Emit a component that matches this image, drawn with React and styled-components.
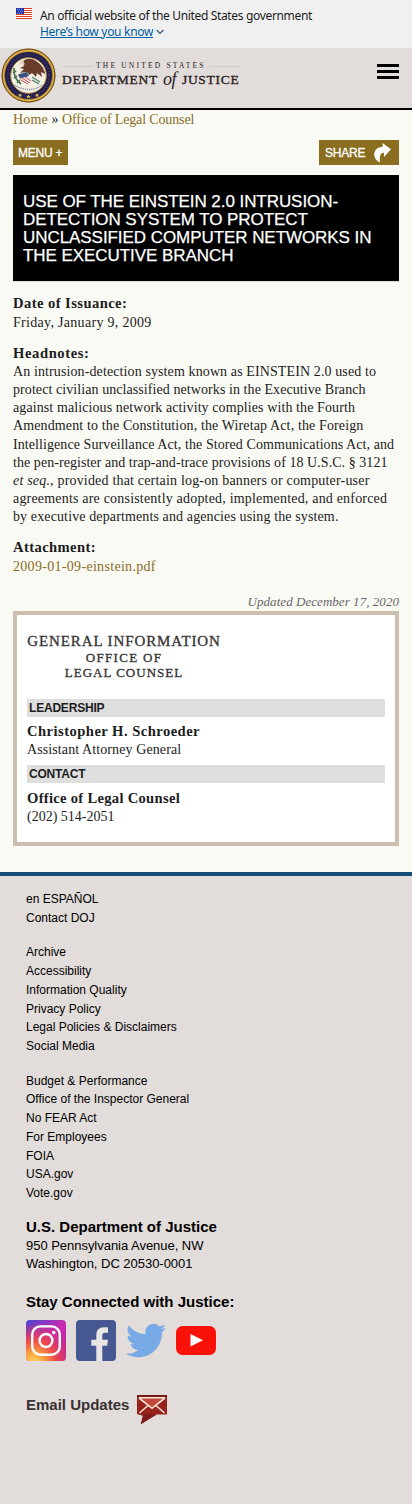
import React from 'react';
import styled, { createGlobalStyle } from 'styled-components';

const serif = '"Liberation Serif", serif';
const sans = '"Liberation Sans", sans-serif';
const gold = '#8a6d1f';

const Global = createGlobalStyle`
  * { box-sizing: border-box; }
  body { margin: 0; background: #fafaf5; color: #1c1c1c; font: 14px/18.2px ${serif}; }
  h1, h2, h3, p, ul { margin: 0; padding: 0; font-weight: inherit; font-size: inherit; }
  a { color: inherit; text-decoration: none; }
  svg { display: block; flex: none; }
`;

const Banner = styled.aside`
  display: flex;
  gap: 8px;
  height: 48px;
  padding: 8px 16px;
  background: #f0f0f0;
  font: 12px/16px "Noto Sans", sans-serif;
  letter-spacing: -0.34px;
  color: #1b1b1b;
  white-space: nowrap;
`;
const KnowLink = styled.a`
  display: flex;
  align-items: center;
  gap: 3px;
  color: #005ea2;
  letter-spacing: -0.3px;
  span { text-decoration: underline; }
`;

const Header = styled.header`
  display: flex;
  align-items: flex-start;
  height: 62px;
  background: #e2dcda;
  border-bottom: 2px solid #000;
`;
const Brand = styled.a`
  display: flex;
  flex: 1;
  padding: 0 0 0 1px;
  color: #2a211f;
`;
const Wordmark = styled.div`
  width: 179px;
  margin: 12px 0 0 6px;
  white-space: nowrap;
`;
const TopWords = styled.div`
  display: flex;
  align-items: center;
  gap: 3px;
  height: 12px;
  font-size: 7.5px;
  letter-spacing: 2.2px;
  &::before, &::after { content: ''; height: 1px; background: #d3cbc8; }
  &::before { width: 31px; }
  &::after { flex: 1; }
`;
const BigWords = styled.div`
  display: flex;
  height: 16px;
  font-size: 13.5px;
  line-height: 15px;
  letter-spacing: 0.72px;
  -webkit-text-stroke: 0.35px #2a211f;
`;
const Of = styled.i`
  width: 24px;
  padding-left: 5px;
  font-size: 18px;
  line-height: 15px;
  letter-spacing: -0.5px;
  -webkit-text-stroke: 0;
`;
const Burger = styled.button`
  display: grid;
  gap: 3px;
  width: 22px;
  margin: 16px 13px 0 0;
  padding: 0;
  border: 0;
  background: none;
  span { height: 3px; background: #000; }
`;

const Main = styled.main`
  padding: 0 13px;
`;
const Crumbs = styled.nav`
  height: 30px;
  padding-top: 1px;
  white-space: nowrap;
  a { color: ${gold}; letter-spacing: -0.14px; }
  a:first-child { letter-spacing: 0.2px; }
`;
const Actions = styled.div`
  display: flex;
  justify-content: space-between;
`;
const Action = styled.button`
  display: flex;
  align-items: center;
  justify-content: space-between;
  width: ${p => p.$w}px;
  height: 25px;
  padding: 1px ${p => p.$right}px 0 ${p => p.$left}px;
  border: 0;
  background: ${gold};
  color: #fff;
  font: 12px/24px ${sans};
  letter-spacing: -0.22px;
  white-space: nowrap;
  -webkit-text-stroke: 0.3px #fff;
`;
const Title = styled.h1`
  height: 106px;
  margin-top: 10px;
  padding: 18px 10px 16px;
  background: #000;
  color: #fff;
  box-shadow: 0 1px 0 #d9d9d6;
  font: 17px/18px ${sans};
  letter-spacing: -0.06px;
  text-transform: uppercase;
  white-space: nowrap;
  -webkit-text-stroke: 0.25px #fff;
`;

const Field = styled.section`
  margin-top: ${p => p.$gap || 12.8}px;
`;
const Label = styled.h2`
  margin: -0.9px 0 0.9px;
  font-size: 14.6px;
  font-weight: bold;
  letter-spacing: ${p => p.$ls}px;
  white-space: nowrap;
`;
const Line = styled.span`
  display: block;
  letter-spacing: ${p => p.$ls || 0}px;
  white-space: nowrap;
`;
const FileLink = styled.a`
  display: block;
  letter-spacing: 0.31px;
  color: ${gold};
`;
const Updated = styled.p`
  margin-top: 17.1px;
  font-size: 13px;
  font-style: italic;
  letter-spacing: 0.05px;
  text-align: right;
  color: #666;
`;

const Card = styled.section`
  height: 235px;
  padding: 17px 10px 0;
  border: 4px solid #cdbfb0;
  background: #fff;
`;
const CardTitle = styled.h2`
  width: 194px;
  height: 67px;
  text-align: center;
  white-space: nowrap;
  color: #333;
  -webkit-text-stroke: 0.3px #333;
`;
const CapLine = styled.span`
  display: block;
  font-size: ${p => p.$size}px;
  line-height: ${p => p.$lh}px;
  letter-spacing: ${p => p.$ls}px;
`;
const Bar = styled.h3`
  height: 18px;
  margin-top: ${p => p.$gap || 0}px;
  margin-bottom: 6px;
  padding-left: 2px;
  background: #dedede;
  font: bold 12px/19px ${sans};
  letter-spacing: -0.2px;
`;

const Footer = styled.footer`
  height: 632px;
  margin-top: 26px;
  padding: 13.9px 26px 0;
  border-top: 4px solid #124d79;
  background: #e2dcda;
  color: #000;
  font: 12px/18.7px ${sans};
`;
const Links = styled.ul`
  list-style: none;
  margin-bottom: ${p => p.$last ? 14.4 : 16.1}px;
`;
const FootTitle = styled.h3`
  margin-top: ${p => p.$gap || 0}px;
  font-size: 15px;
  font-weight: bold;
  line-height: 19px;
  color: ${p => p.$color || '#000'};
`;
const Address = styled.p`
  padding-top: 0.6px;
  font-size: 13px;
  line-height: 18px;
  letter-spacing: -0.03px;
`;
const Social = styled.div`
  display: flex;
  gap: 10px;
  margin-top: 9px;
`;
const Email = styled.a`
  display: flex;
  align-items: flex-start;
  gap: 8px;
  margin-top: 33.6px;
`;

const Flag = () => (
  <svg width="16" height="11" viewBox="0 0 16 11">
    <rect width="16" height="11" fill="#fff" />
    {[0, 2, 4, 6, 8, 10].map(y => <rect key={y} y={y} width="16" height="1" fill="#db3e1f" />)}
    <rect width="8" height="6" fill="#1e33b1" />
    {[1, 3, 5].map(y => [1, 3, 5].map(x => <rect key={`${x}${y}`} x={x + (y === 3 ? 1 : 0)} y={y - .2} width=".9" height=".7" fill="#dfe4ff" />))}
  </svg>
);

const Seal = () => (
  <svg width="55" height="55" viewBox="0 0 55 55">
    <circle cx="27.5" cy="27.5" r="27" fill="#a5792c" />
    <circle cx="27.5" cy="27.5" r="26.4" fill="none" stroke="#6e4c1c" strokeWidth="1" />
    <circle cx="27.5" cy="27.5" r="25" fill="none" stroke="#e0b748" strokeWidth="1.3" />
    <circle cx="27.5" cy="27.5" r="23.6" fill="#211d4e" />
    <circle cx="27.5" cy="27.5" r="20.7" fill="none" stroke="#aaa078" strokeWidth="1.7" strokeDasharray="1 1.9" opacity=".3" />
    <circle cx="27.5" cy="27.5" r="17.8" fill="#f4efe2" stroke="#b78b42" />
    <path d="M22 13c4-3 9-3 13 0 5 3 8 7 9 13l-4-2 1 5-5-4-1 4-4-4-4 3-3-4-5 1 4-4-4-1 4-2z" fill="#683b2b" />
    <path d="M22 12.5c-3 .5-4.5 2.5-4 4.5l3-1.5 3 1z" fill="#d9d2bd" />
    <path d="M13 20q-1 10 7 16M15 23l-3 2m4 3-3 2m6 2-3 3" fill="none" stroke="#42764e" strokeWidth="1.7" />
    <path d="m17 27 9-3 6 7-3 6-10-4z" fill="#f8ecea" />
    <path d="m17 26.5 9-2.5 2 4-9 2.5z" fill="#35517e" />
    <path d="m19 31.5 8 4.5m-6-6 8 5m-5-6 6 4" stroke="#c9555c" strokeWidth="1" />
    <path d="m31 29 8 5m-8-2 7 4" stroke="#47806b" strokeWidth="1.3" />
    <path d="M13.5 37q14 9 28 0" fill="none" stroke="#7c89ae" strokeWidth="1.4" strokeDasharray="1.2 1" />
    {[19, 27.5, 36].map(x => <path key={x} d={`M${x} ${x === 27.5 ? 46.6 : 45.2}l.7 1.4 1.5.1-1.2 1 .4 1.4-1.4-.8-1.4.8.4-1.4-1.2-1 1.5-.1z`} fill="#e4c15a" />)}
  </svg>
);

const ShareArrow = () => (
  <svg width="18" height="20" viewBox="0 0 18 20">
    <path d="M9.5 0 18 6.2 11 14V9.8c-3-.2-5 2.8-4 9.6C3 18 .5 13.4 1.4 9.8 2.3 6 5.6 3.9 9.7 4z" fill="#fff" />
  </svg>
);

const Instagram = () => (
  <svg width="40" height="41" viewBox="0 0 40 40" preserveAspectRatio="none">
    <defs>
      <linearGradient id="igBase" x1=".1" y1="0" x2=".9" y2="1">
        <stop offset="0" stopColor="#4b43d0" /><stop offset=".45" stopColor="#c92bb0" /><stop offset="1" stopColor="#b8249a" />
      </linearGradient>
      <radialGradient id="igWarm" cx=".2" cy="1.05" r="1">
        <stop offset="0" stopColor="#ffd85c" /><stop offset=".25" stopColor="#fca541" /><stop offset=".55" stopColor="#f04a48" /><stop offset="1" stopColor="#e0306c" stopOpacity="0" />
      </radialGradient>
    </defs>
    <rect width="40" height="40" rx="4" fill="url(#igBase)" />
    <rect width="40" height="40" rx="4" fill="url(#igWarm)" />
    <g fill="none" stroke="#fff" strokeWidth="2.4">
      <rect x="6.2" y="6.2" width="27.6" height="27.6" rx="8" />
      <circle cx="20" cy="20" r="6.4" />
    </g>
    <circle cx="27.8" cy="12.2" r="1.8" fill="#fff" />
  </svg>
);

const Facebook = () => (
  <svg width="40" height="41" viewBox="0 0 40 40" preserveAspectRatio="none">
    <rect width="40" height="40" rx="4" fill="#465892" />
    <path d="M20.3 40V25h-5v-5.8h5v-4.4C20.3 9.7 23.3 7 28 7c1.5 0 3 .1 4 .3v5.2h-2.9c-2.3 0-2.8 1.2-2.8 2.9v3.8H32l-.8 5.8h-4.9v15z" fill="#e9e5e5" />
  </svg>
);

const Twitter = () => (
  <svg width="40" height="41" viewBox="0 0 24 24" preserveAspectRatio="none">
    <path d="M23.95 4.57a10 10 0 0 1-2.82.78 4.96 4.96 0 0 0 2.16-2.73c-.95.56-2 .96-3.13 1.19a4.92 4.92 0 0 0-8.38 4.48C7.69 8.1 4.07 6.13 1.64 3.16a4.92 4.92 0 0 0 1.52 6.57 4.9 4.9 0 0 1-2.23-.61v.06a4.92 4.92 0 0 0 3.95 4.83 5 5 0 0 1-2.21.08 4.94 4.94 0 0 0 4.6 3.42A9.87 9.87 0 0 1 0 19.54a14 14 0 0 0 7.55 2.21c9.05 0 14-7.5 14-13.98 0-.21 0-.42-.02-.63a9.94 9.94 0 0 0 2.46-2.55z" fill="#76a9e6" />
  </svg>
);

const YouTube = () => (
  <svg width="40" height="41" viewBox="0 0 40 41">
    <rect y="6" width="40" height="29" rx="6.5" fill="#fa1109" />
    <path d="M14.5 14v12.5L27 20.3z" fill="#fff" />
  </svg>
);

const Mail = () => (
  <svg width="30" height="30" viewBox="0 0 30 30">
    <path d="M0 0h30v19.5H18.5L3.5 29.5l3-8.5L0 19z" fill="#97231c" />
    <path d="M1 2h28L15 13z" fill="#c24a3c" />
    <path d="M0 0h30v1.5H0z" fill="#641c16" />
    <path d="M6 19.5h14L4 29z" fill="#7d1c18" />
    <path d="m2 3 13 10.3L28 3M2.5 18l8.500-7.500m16.500 7.500L19 10.500M2 2.800h26" fill="none" stroke="#fae4d4" strokeWidth="1.6" />
  </svg>
);

const notes = [
  ['An intrusion-detection system known as EINSTEIN 2.0 used to', 0.11],
  ['protect civilian unclassified networks in the Executive Branch', 0.075],
  ['against malicious network activity complies with the Fourth', 0.096],
  ['Amendment to the Constitution, the Wiretap Act, the Foreign', 0.128],
  ['Intelligence Surveillance Act, the Stored Communications Act, and', 0.08],
  ['the pen-register and trap-and-trace provisions of 18 U.S.C. § 3121', 0.055],
  [<><i>et seq.</i>, provided that certain log-on banners or computer-user</>, 0.186],
  ['agreements are consistently adopted, implemented, and enforced', 0.192],
  ['by executive departments and agencies using the system.', 0.122],
];

const footerLinks = [
  ['en ESPAÑOL', 'Contact DOJ'],
  ['Archive', 'Accessibility', 'Information Quality', 'Privacy Policy', 'Legal Policies & Disclaimers', 'Social Media'],
  ['Budget & Performance', 'Office of the Inspector General', 'No FEAR Act', 'For Employees', 'FOIA', 'USA.gov', 'Vote.gov'],
];

export default function App() {
  return (
    <>
      <Global />
      <Banner>
        <Flag />
        <div>
          <div>An official website of the United States government</div>
          <KnowLink href="#">
            <span>Here’s how you know</span>
            <svg width="8" height="6" viewBox="0 0 8 6"><path d="m.6 1 3.4 3.4L7.4 1" fill="none" stroke="#355d7c" strokeWidth="1.2" /></svg>
          </KnowLink>
        </div>
      </Banner>
      <Header>
        <Brand href="#">
          <Seal />
          <Wordmark>
            <TopWords>THE UNITED STATES</TopWords>
            <BigWords>DEPARTMENT<Of>of</Of>JUSTICE</BigWords>
          </Wordmark>
        </Brand>
        <Burger aria-label="Menu"><span /><span /><span /></Burger>
      </Header>
      <Main>
        <Crumbs><a href="#">Home</a> » <a href="#">Office of Legal Counsel</a></Crumbs>
        <Actions>
          <Action $w={55} $left={5} $right={5}>MENU +</Action>
          <Action $w={80} $left={6} $right={8}>SHARE<ShareArrow /></Action>
        </Actions>
        <Title>
          Use of the Einstein 2.0 Intrusion-<br />
          Detection System to Protect<br />
          Unclassified Computer Networks in<br />
          the Executive Branch
        </Title>
        <Field $gap={14.3}>
          <Label $ls={0.43}>Date of Issuance:</Label>
          <Line $ls={0.3}>Friday, January 9, 2009</Line>
        </Field>
        <Field>
          <Label $ls={0.6}>Headnotes:</Label>
          <p>{notes.map(([text, ls], i) => <Line key={i} $ls={ls}>{text}</Line>)}</p>
        </Field>
        <Field>
          <Label $ls={0.4}>Attachment:</Label>
          <FileLink href="#">2009-01-09-einstein.pdf</FileLink>
        </Field>
        <Updated>Updated December 17, 2020</Updated>
        <Card>
          <CardTitle>
            <CapLine $size={15} $lh={18} $ls={0.9}>GENERAL INFORMATION</CapLine>
            <CapLine $size={13} $lh={16} $ls={1.3}>OFFICE OF</CapLine>
            <CapLine $size={13} $lh={13} $ls={1}>LEGAL COUNSEL</CapLine>
          </CardTitle>
          <Bar>LEADERSHIP</Bar>
          <Label $ls={0.46}>Christopher H. Schroeder</Label>
          <Line $ls={0.1}>Assistant Attorney General</Line>
          <Bar $gap={6}>CONTACT</Bar>
          <Label $ls={0.29}>Office of Legal Counsel</Label>
          <Line>(202) 514-2051</Line>
        </Card>
      </Main>
      <Footer>
        {footerLinks.map((group, i) => (
          <Links key={i} $last={i === 2}>{group.map(name => <li key={name}><a href="#">{name}</a></li>)}</Links>
        ))}
        <FootTitle>U.S. Department of Justice</FootTitle>
        <Address>950 Pennsylvania Avenue, NW<br />Washington, DC 20530-0001</Address>
        <FootTitle $gap={19.6}>Stay Connected with Justice:</FootTitle>
        <Social><Instagram /><Facebook /><Twitter /><YouTube /></Social>
        <Email href="#">
          <FootTitle $color="#3a3132">Email Updates</FootTitle>
          <Mail />
        </Email>
      </Footer>
    </>
  );
}
